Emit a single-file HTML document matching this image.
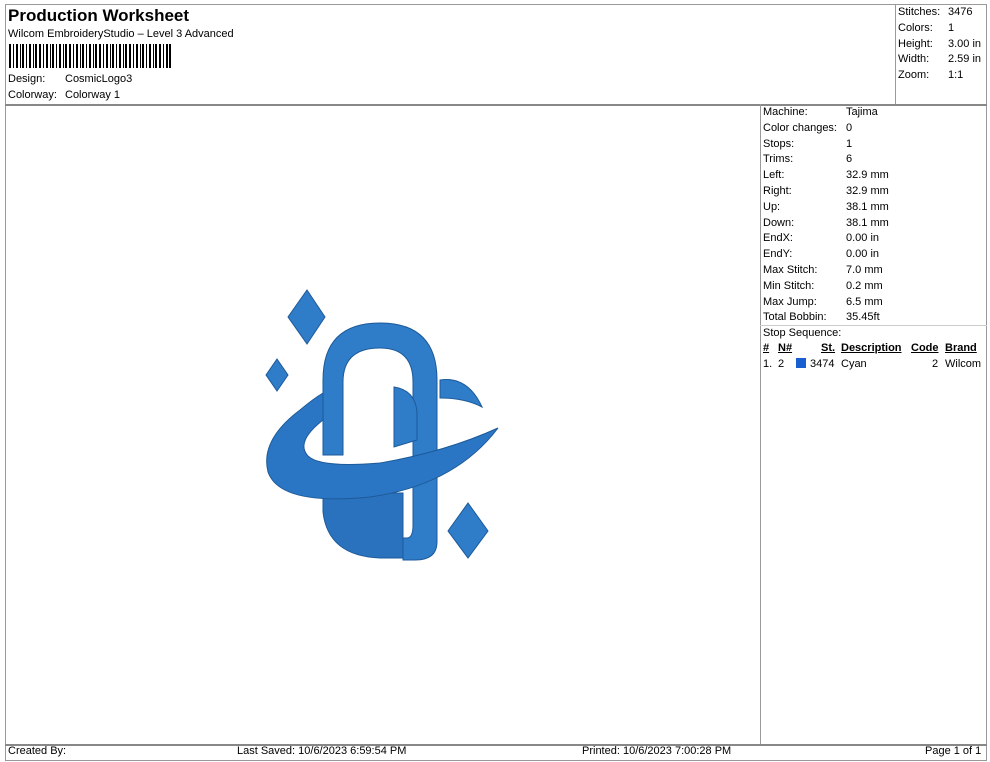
<!DOCTYPE html>
<html><head><style>
body{margin:0;width:990px;height:762px;background:#fff;font-family:"Liberation Sans",Arial,sans-serif;font-size:11px;color:#000;position:relative;overflow:hidden}
.a{position:absolute;white-space:nowrap}
.ln{position:absolute;background:#999}
</style></head><body>
<div class="ln" style="left:5px;top:4px;width:982px;height:1px"></div>
<div class="ln" style="left:5px;top:4px;width:1px;height:757px"></div>
<div class="ln" style="left:986px;top:4px;width:1px;height:757px"></div>
<div class="ln" style="left:5px;top:104px;width:982px;height:2px;background:#888"></div>
<div class="ln" style="left:895px;top:4px;width:1px;height:100px"></div>
<div class="ln" style="left:760px;top:104px;width:1px;height:640px"></div>
<div class="ln" style="left:760px;top:325px;width:227px;height:1px;background:#ccc"></div>
<div class="ln" style="left:5px;top:744px;width:982px;height:2px;background:#888"></div>
<div class="ln" style="left:5px;top:760px;width:982px;height:1px"></div>

<div class="a" style="left:8px;top:6px;font-size:17px;font-weight:bold">Production Worksheet</div>
<div class="a" style="left:8px;top:28px">Wilcom EmbroideryStudio – Level 3 Advanced</div>
<svg class="a" style="left:9px;top:44px" width="162" height="24">
<g fill="#000">
<rect x="0" width="2" height="24"/><rect x="4" width="1" height="24"/><rect x="7" width="2" height="24"/><rect x="11" width="1" height="24"/><rect x="13" width="2" height="24"/><rect x="17" width="1" height="24"/><rect x="20" width="2" height="24"/><rect x="24" width="1" height="24"/><rect x="26" width="2" height="24"/><rect x="30" width="2" height="24"/><rect x="34" width="1" height="24"/><rect x="37" width="2" height="24"/><rect x="41" width="1" height="24"/><rect x="43" width="2" height="24"/><rect x="47" width="1" height="24"/><rect x="50" width="2" height="24"/><rect x="54" width="1" height="24"/><rect x="56" width="2" height="24"/><rect x="60" width="2" height="24"/><rect x="64" width="1" height="24"/><rect x="67" width="2" height="24"/><rect x="71" width="1" height="24"/><rect x="73" width="2" height="24"/><rect x="77" width="1" height="24"/><rect x="80" width="2" height="24"/><rect x="84" width="1" height="24"/><rect x="86" width="2" height="24"/><rect x="90" width="2" height="24"/><rect x="94" width="1" height="24"/><rect x="97" width="2" height="24"/><rect x="101" width="1" height="24"/><rect x="103" width="2" height="24"/><rect x="107" width="1" height="24"/><rect x="110" width="2" height="24"/><rect x="114" width="1" height="24"/><rect x="116" width="2" height="24"/><rect x="120" width="2" height="24"/><rect x="124" width="1" height="24"/><rect x="127" width="2" height="24"/><rect x="131" width="1" height="24"/><rect x="133" width="2" height="24"/><rect x="137" width="1" height="24"/><rect x="140" width="2" height="24"/><rect x="144" width="1" height="24"/><rect x="146" width="2" height="24"/><rect x="150" width="2" height="24"/><rect x="154" width="1" height="24"/><rect x="157" width="2" height="24"/><rect x="160" width="2" height="24"/>
</g></svg>
<div class="a" style="left:8px;top:73px">Design:</div><div class="a" style="left:65px;top:73px">CosmicLogo3</div>
<div class="a" style="left:8px;top:89px">Colorway:</div><div class="a" style="left:65px;top:89px">Colorway 1</div>

<div class="a" style="left:898px;top:5px;line-height:15.8px">Stitches:<br>Colors:<br>Height:<br>Width:<br>Zoom:</div>
<div class="a" style="left:948px;top:5px;line-height:15.8px">3476<br>1<br>3.00 in<br>2.59 in<br>1:1</div>

<div class="a" style="left:763px;top:105px;line-height:15.8px">Machine:<br>Color changes:<br>Stops:<br>Trims:<br>Left:<br>Right:<br>Up:<br>Down:<br>EndX:<br>EndY:<br>Max Stitch:<br>Min Stitch:<br>Max Jump:<br>Total Bobbin:<br>Stop Sequence:</div>
<div class="a" style="left:846px;top:105px;line-height:15.8px">Tajima<br>0<br>1<br>6<br>32.9 mm<br>32.9 mm<br>38.1 mm<br>38.1 mm<br>0.00 in<br>0.00 in<br>7.0 mm<br>0.2 mm<br>6.5 mm<br>35.45ft</div>
<div class="a" style="left:763px;top:342px;font-weight:bold;text-decoration:underline">#</div>
<div class="a" style="left:778px;top:342px;font-weight:bold;text-decoration:underline">N#</div>
<div class="a" style="left:821px;top:342px;font-weight:bold;text-decoration:underline">St.</div>
<div class="a" style="left:841px;top:342px;font-weight:bold;text-decoration:underline">Description</div>
<div class="a" style="left:911px;top:342px;font-weight:bold;text-decoration:underline">Code</div>
<div class="a" style="left:945px;top:342px;font-weight:bold;text-decoration:underline">Brand</div>
<div class="a" style="left:763px;top:358px">1.</div>
<div class="a" style="left:778px;top:358px">2</div>
<div class="a" style="left:796px;top:358px;width:10px;height:10px;background:#1a5fcf"></div>
<div class="a" style="left:810px;top:358px">3474</div>
<div class="a" style="left:841px;top:358px">Cyan</div>
<div class="a" style="left:932px;top:358px">2</div>
<div class="a" style="left:945px;top:358px">Wilcom</div>

<div class="a" style="left:8px;top:745px">Created By:</div>
<div class="a" style="left:237px;top:745px">Last Saved: 10/6/2023 6:59:54 PM</div>
<div class="a" style="left:582px;top:745px">Printed: 10/6/2023 7:00:28 PM</div>
<div class="a" style="left:925px;top:745px">Page 1 of 1</div>

<svg class="a" style="left:260px;top:280px" width="250" height="290" viewBox="0 0 250 290">
<g fill="#2f7cc9" stroke="#1d5a99" stroke-width="1">
<path d="M47 10 L65 37 L47 64 L28 37Z"/>
<path d="M17 79 L28 95 L17 111 L6 95Z"/>
<path d="M208 223 L228 251 L208 278 L188 251Z"/>
<path d="M63 213 L63 232 Q68 276 120 278 L143 278 L143 213Z" fill="#2a72bd"/>
<path d="M180 100 Q208 96 222 127 Q205 118 180 118Z"/>
<path d="M63 175 L63 100 Q63 43 120 43 Q177 43 177 100 L177 262 Q177 280 155 280 L143 280 L143 258 L147 258 Q153 258 153 245 L153 102 Q153 68 120 68 Q83 68 83 102 L83 175Z"/>
<path d="M134 107 Q155 110 157 132 L157 160 L134 167Z"/>
<path d="M238 148 Q195 205 110 217 Q20 226 8 192 Q0 160 40 130 Q53 119 63 113 L63 140 Q35 162 48 176 Q60 188 120 183 Q185 172 238 148Z" fill="#2b76c4"/>
</g>
</svg>
</body></html>
